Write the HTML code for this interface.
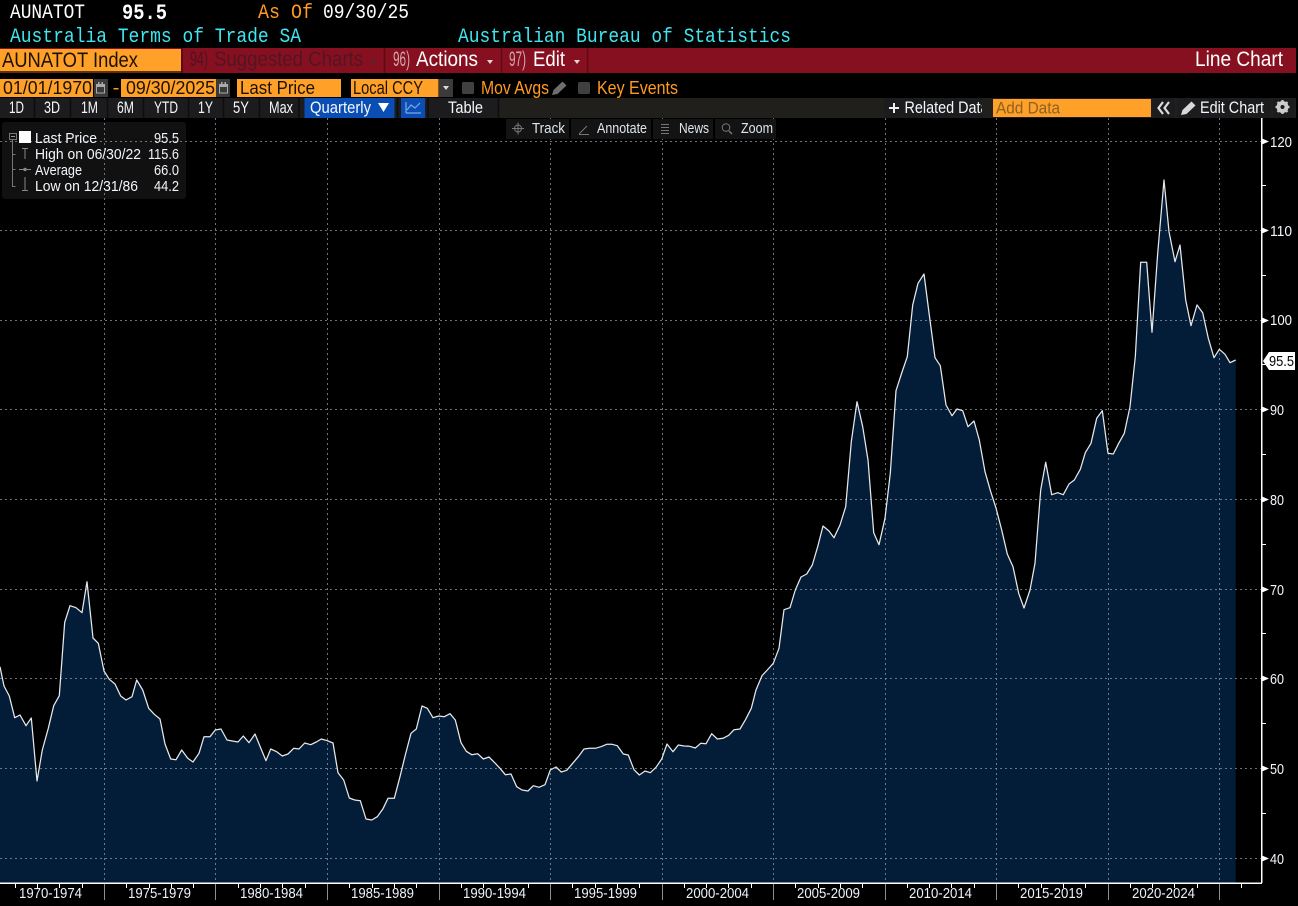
<!DOCTYPE html>
<html lang="en"><head><meta charset="utf-8"><title>AUNATOT Line Chart</title>
<style>
html,body{margin:0;padding:0;background:#000;width:1298px;height:906px;overflow:hidden}
svg{display:block}
text{font-family:"Liberation Sans",sans-serif;white-space:pre}
.m{font-family:"Liberation Mono",monospace;font-size:20.5px}
.r2{font-size:21px}
.r3{font-size:18.5px}
.r4{font-size:16.5px;fill:#f4f8fc}
.ov{font-size:14.5px;fill:#dfe6ee}
.lg{font-size:14.5px;fill:#f2f6fa}
.ax{font-size:14.5px;fill:#f2f7fc}
.xl{font-size:14.5px;fill:#eaf2fa}
</style></head><body>
<svg width="1298" height="906" viewBox="0 0 1298 906" xmlns="http://www.w3.org/2000/svg">
<defs><clipPath id="rd"><rect x="884" y="98" width="98" height="20"/></clipPath></defs>
<rect width="1298" height="906" fill="#000"/>

<!-- legend background -->
<rect x="2" y="122" width="184" height="77" rx="3" fill="#111112"/>

<!-- area -->
<polygon fill="#031d38" points="0,883 0,666.7 4,686 9.3,696 14.7,717.7 20,715 26,725.7 31.3,718 37,781 42.3,750 48.3,728.3 53.7,705.7 59.3,695.7 64.7,622.3 70,605.7 76,607.7 82,612.7 87,581.7 93,638 98.3,643.3 104,671 109.3,679.3 115,684 120.7,696 126,700 132,696.7 136.7,680 142.7,690 148.7,708.3 154.3,714.3 160,719 165,744 170.7,759 176,759.7 181.7,750 187.7,758.3 193,762 199,753.3 204,736.7 210,736.7 215.3,730 221,729 227,740 232.3,741 238,742 243.3,736 249,742.7 255,734 260.3,747 266,760.7 270.7,749 276.7,751.7 282.3,756 288,754 293.7,748.3 299,749 304.7,743 310.7,744.7 316.3,742 321.3,739 327.3,740.7 333,743 338,772.7 343.7,780 349.3,798 354.7,800 360.3,800.7 366,819 371.7,820 377.3,816.7 383,808.7 388,798.3 394.3,798.3 400,776.7 405.3,755 411,733.3 416.3,729 422,706 427.3,708.3 433,717.7 438.7,716 444.3,716.7 450,713.7 455.3,720 461,742.7 466.3,751.3 471.7,754.7 477.7,753.7 483.3,759 489,757 494.7,762.7 500,768.3 505.3,774.7 511,774 516.7,786.7 522,790 528,791 533.3,785.7 539,787.3 545,784.7 550.3,770 556,767 561.3,772 566.7,770.3 572.7,763.3 578.3,756.7 584,749 589.7,748.3 595.3,748.3 601,746.7 606.7,744.3 612,744.3 617.3,745.7 623.3,754 628.3,755 634,769.7 639.3,775 645,771 650.3,772.7 656,767.3 661.7,759 667,744 673,751.7 678.3,745 684,746 689.7,746.3 695.3,748 700.7,743.3 706,743.7 711.7,733.7 717.3,739 723,738.3 728.7,735.3 734,729.7 740,729 745.7,719.3 751.3,708.3 756,690 762,675.7 767.3,670 773.3,663.3 779,648.3 784,609.7 790,607.7 795.3,590 801,577 806.7,574 812.3,565 817.7,546.7 823,526 829,531 834,537.7 840,525 845.7,506.7 851.3,441.7 857,401.7 862.7,426.7 868,460 873.7,532.7 879,544.7 885,518.3 890.3,473.3 896,390.7 901.7,373 907.3,356.7 912.7,305 918,283.3 924,274 929.3,315 935,357.7 940.3,365.7 946,405 952,415.7 957,409 962.7,410.7 968,426.7 974,421 979.3,440 985,471.7 990.7,491.7 996,508 1001.7,530 1007.3,554 1013,566.7 1018.7,593.3 1024,608 1030,590 1035,563.3 1040.7,490 1045.7,462.3 1051.7,494.7 1057.7,492.7 1063.3,494.7 1069,484 1074.3,480 1080.3,469.3 1085.3,452.7 1091,443.3 1096.7,418.3 1102.3,410.7 1108,453.3 1113.3,454 1118.7,443.3 1124.3,433.3 1130,406.7 1135.3,356.7 1140.7,262.3 1146.7,262.3 1152,332.3 1157.7,253.3 1164,180 1169,231.7 1175,261.7 1180,245 1185.7,300 1191,325.7 1197,305 1202.7,312.7 1208.3,338.3 1214,357.7 1219.3,349.3 1225,354.3 1230,362.7 1235.7,360 1235.7,883"/>

<!-- grid -->
<g stroke="#8a8f96" stroke-opacity=".8" stroke-width="1" stroke-dasharray="2 3" fill="none">
<path d="M0 141.5H1262M0 230.5H1262M0 320.5H1262M0 409.5H1262M0 499.5H1262M0 589.5H1262M0 678.5H1262M0 768.5H1262M0 858.5H1262"/>
<path d="M104.5 118V883M215.5 118V883M327.5 118V883M439.5 118V883M550.5 118V883M662.5 118V883M773.5 118V883M885.5 118V883M996.5 118V883M1108.5 118V883M1219.5 118V883"/>
</g>

<!-- line -->
<polyline fill="none" stroke="#e6e8ea" stroke-width="1.25" stroke-linejoin="round" points="0,666.7 4,686 9.3,696 14.7,717.7 20,715 26,725.7 31.3,718 37,781 42.3,750 48.3,728.3 53.7,705.7 59.3,695.7 64.7,622.3 70,605.7 76,607.7 82,612.7 87,581.7 93,638 98.3,643.3 104,671 109.3,679.3 115,684 120.7,696 126,700 132,696.7 136.7,680 142.7,690 148.7,708.3 154.3,714.3 160,719 165,744 170.7,759 176,759.7 181.7,750 187.7,758.3 193,762 199,753.3 204,736.7 210,736.7 215.3,730 221,729 227,740 232.3,741 238,742 243.3,736 249,742.7 255,734 260.3,747 266,760.7 270.7,749 276.7,751.7 282.3,756 288,754 293.7,748.3 299,749 304.7,743 310.7,744.7 316.3,742 321.3,739 327.3,740.7 333,743 338,772.7 343.7,780 349.3,798 354.7,800 360.3,800.7 366,819 371.7,820 377.3,816.7 383,808.7 388,798.3 394.3,798.3 400,776.7 405.3,755 411,733.3 416.3,729 422,706 427.3,708.3 433,717.7 438.7,716 444.3,716.7 450,713.7 455.3,720 461,742.7 466.3,751.3 471.7,754.7 477.7,753.7 483.3,759 489,757 494.7,762.7 500,768.3 505.3,774.7 511,774 516.7,786.7 522,790 528,791 533.3,785.7 539,787.3 545,784.7 550.3,770 556,767 561.3,772 566.7,770.3 572.7,763.3 578.3,756.7 584,749 589.7,748.3 595.3,748.3 601,746.7 606.7,744.3 612,744.3 617.3,745.7 623.3,754 628.3,755 634,769.7 639.3,775 645,771 650.3,772.7 656,767.3 661.7,759 667,744 673,751.7 678.3,745 684,746 689.7,746.3 695.3,748 700.7,743.3 706,743.7 711.7,733.7 717.3,739 723,738.3 728.7,735.3 734,729.7 740,729 745.7,719.3 751.3,708.3 756,690 762,675.7 767.3,670 773.3,663.3 779,648.3 784,609.7 790,607.7 795.3,590 801,577 806.7,574 812.3,565 817.7,546.7 823,526 829,531 834,537.7 840,525 845.7,506.7 851.3,441.7 857,401.7 862.7,426.7 868,460 873.7,532.7 879,544.7 885,518.3 890.3,473.3 896,390.7 901.7,373 907.3,356.7 912.7,305 918,283.3 924,274 929.3,315 935,357.7 940.3,365.7 946,405 952,415.7 957,409 962.7,410.7 968,426.7 974,421 979.3,440 985,471.7 990.7,491.7 996,508 1001.7,530 1007.3,554 1013,566.7 1018.7,593.3 1024,608 1030,590 1035,563.3 1040.7,490 1045.7,462.3 1051.7,494.7 1057.7,492.7 1063.3,494.7 1069,484 1074.3,480 1080.3,469.3 1085.3,452.7 1091,443.3 1096.7,418.3 1102.3,410.7 1108,453.3 1113.3,454 1118.7,443.3 1124.3,433.3 1130,406.7 1135.3,356.7 1140.7,262.3 1146.7,262.3 1152,332.3 1157.7,253.3 1164,180 1169,231.7 1175,261.7 1180,245 1185.7,300 1191,325.7 1197,305 1202.7,312.7 1208.3,338.3 1214,357.7 1219.3,349.3 1225,354.3 1230,362.7 1235.7,360"/>

<!-- header -->
<text class="m" x="10" y="18" fill="#fff" textLength="75" lengthAdjust="spacingAndGlyphs">AUNATOT</text>
<text class="m" x="122" y="19" fill="#fff" font-weight="700" style="font-size:22px" textLength="45" lengthAdjust="spacingAndGlyphs">95.5</text>
<text class="m" x="258" y="18" fill="#ff9a22" textLength="55" lengthAdjust="spacingAndGlyphs">As Of</text>
<text class="m" x="323" y="18" fill="#fff" textLength="86" lengthAdjust="spacingAndGlyphs">09/30/25</text>
<text class="m" x="10" y="42" fill="#3fe6f0" textLength="291" lengthAdjust="spacingAndGlyphs">Australia Terms of Trade SA</text>
<text class="m" x="458" y="42" fill="#3fe6f0" textLength="333" lengthAdjust="spacingAndGlyphs">Australian Bureau of Statistics</text>

<!-- red bar -->
<rect x="0" y="48" width="1296" height="25" fill="#86101f"/>
<rect x="0" y="49" width="181" height="22.500" fill="#ffa028"/>
<rect x="181" y="48" width="2" height="25" fill="#5a0b14"/>
<path d="M384.5 48V73M501.5 48V73M587.5 48V73" stroke="#5e0b16" stroke-width="1.5"/>
<rect x="0" y="71" width="181" height="1.5" fill="#5b3a08"/>
<text class="r2" x="2" y="67" fill="#1c1204" textLength="136" lengthAdjust="spacingAndGlyphs">AUNATOT Index</text>
<text class="r2" x="190" y="66" fill="#4f1220" textLength="18" lengthAdjust="spacingAndGlyphs">94)</text>
<text class="r2" x="214" y="66" fill="#531524" textLength="149" lengthAdjust="spacingAndGlyphs">Suggested Charts</text>
<path d="M370 60h6l-3 4z" fill="#5c2230"/>
<text class="r2" x="393" y="66" fill="#cda7ac" textLength="17" lengthAdjust="spacingAndGlyphs">96)</text>
<text class="r2" x="416" y="66" fill="#fff" textLength="62" lengthAdjust="spacingAndGlyphs">Actions</text>
<path d="M487 60h6l-3 4z" fill="#e8d6d8"/>
<text class="r2" x="509" y="66" fill="#cda7ac" textLength="17" lengthAdjust="spacingAndGlyphs">97)</text>
<text class="r2" x="533" y="66" fill="#fff" textLength="32" lengthAdjust="spacingAndGlyphs">Edit</text>
<path d="M574 60h6l-3 4z" fill="#e8d6d8"/>
<text class="r2" x="1195" y="66" fill="#fff" textLength="88" lengthAdjust="spacingAndGlyphs">Line Chart</text>

<!-- row 3 -->
<rect x="0" y="79" width="93" height="18" fill="#ffa028"/>
<rect x="94" y="79" width="14" height="18" fill="#3a3a3a"/>
<rect x="121" y="79" width="95" height="18" fill="#ffa028"/>
<rect x="216" y="79" width="14" height="18" fill="#3a3a3a"/>
<g fill="none" stroke="#aaa" stroke-width="1"><rect x="96.500" y="84.500" width="8" height="8.500"/><rect x="219.500" y="84.500" width="8" height="8.500"/></g>
<path d="M96 84h9v3h-9zM219 84h9v3h-9zM98 82h1.500v2.500h-1.500zM101.500 82h1.500v2.500h-1.500zM221 82h1.500v2.500h-1.500zM224.500 82h1.500v2.500h-1.500z" fill="#aaa"/>
<text class="r3" x="3" y="94" fill="#1c1204" textLength="89" lengthAdjust="spacingAndGlyphs">01/01/1970</text>
<rect x="113.5" y="88" width="5" height="1.5" fill="#ff9a22"/>
<text class="r3" x="126" y="94" fill="#1c1204" textLength="89" lengthAdjust="spacingAndGlyphs">09/30/2025</text>
<rect x="237" y="79" width="104" height="18" fill="#ffa028"/>
<text class="r3" x="240" y="94" fill="#1c1204" textLength="75" lengthAdjust="spacingAndGlyphs">Last Price</text>
<rect x="351" y="79" width="87.500" height="18" fill="#ffa028"/>
<text class="r3" x="353" y="94" fill="#1c1204" textLength="70" lengthAdjust="spacingAndGlyphs">Local CCY</text>
<rect x="439" y="79" width="14" height="18" fill="#3a3a3a"/>
<path d="M443 86h6l-3 4z" fill="#ddd"/>
<rect x="462" y="82" width="12" height="12" rx="1.500" fill="#404040"/>
<text class="r3" x="481" y="94" fill="#ff9a22" textLength="68" lengthAdjust="spacingAndGlyphs">Mov Avgs</text>
<path d="M552 95l1.500-5 9-8.500 4 4-9 8.500z" fill="#6e6e6e"/>
<rect x="578" y="82" width="12" height="12" rx="1.500" fill="#404040"/>
<text class="r3" x="597" y="94" fill="#ff9a22" textLength="81" lengthAdjust="spacingAndGlyphs">Key Events</text>

<!-- row 4 -->
<rect x="0" y="98" width="1296" height="20" fill="#201f1c"/>
<rect x="0" y="98" width="498" height="20" fill="#1c1c1e"/>
<path d="M34.500 98V118M70.500 98V118M107.500 98V118M143.500 98V118M188.500 98V118M223.500 98V118M259.500 98V118M299 98V118M397.500 98V118M428 98V118M498.500 98V118" stroke="#0d0d0d" stroke-width="1.500"/>
<text class="r4" x="9" y="113" textLength="15" lengthAdjust="spacingAndGlyphs">1D</text>
<text class="r4" x="44" y="113" textLength="16" lengthAdjust="spacingAndGlyphs">3D</text>
<text class="r4" x="81" y="113" textLength="17" lengthAdjust="spacingAndGlyphs">1M</text>
<text class="r4" x="117" y="113" textLength="17" lengthAdjust="spacingAndGlyphs">6M</text>
<text class="r4" x="154" y="113" textLength="24" lengthAdjust="spacingAndGlyphs">YTD</text>
<text class="r4" x="198" y="113" textLength="15" lengthAdjust="spacingAndGlyphs">1Y</text>
<text class="r4" x="233" y="113" textLength="16" lengthAdjust="spacingAndGlyphs">5Y</text>
<text class="r4" x="269" y="113" textLength="24" lengthAdjust="spacingAndGlyphs">Max</text>
<rect x="304.500" y="98" width="90" height="20" fill="#0a4eb4"/>
<text class="r4" x="310" y="113" fill="#fff" textLength="61" lengthAdjust="spacingAndGlyphs">Quarterly</text>
<path d="M378 103h11l-5.500 9z" fill="#fff"/>
<rect x="401" y="98" width="24" height="20" fill="#0a4eb4"/>
<path d="M407 110l4-5 4 3 5-5M406 113h15M406 102v11" fill="none" stroke="#7ea8e6" stroke-width="1.200"/>
<text class="r4" x="448" y="113" textLength="35" lengthAdjust="spacingAndGlyphs">Table</text>

<rect x="884" y="98" width="98" height="20" fill="#1c1c1e"/>
<path d="M889 108h10M894 103v10" stroke="#eee" stroke-width="2"/>
<text class="r4" x="904.500" y="113" clip-path="url(#rd)" textLength="84" lengthAdjust="spacingAndGlyphs">Related Data</text>
<rect x="993" y="99" width="158" height="18" fill="#ffa028"/>
<text class="r4" x="996" y="113.500" style="fill:#8c6124;font-size:17px" textLength="64" lengthAdjust="spacingAndGlyphs">Add Data</text>
<rect x="1153" y="98" width="22" height="20" fill="#1c1c1e"/>
<path d="M1163 102l-4.500 6 4.500 6M1169 102l-4.500 6 4.500 6" fill="none" stroke="#ddd" stroke-width="2.200"/>
<rect x="1177" y="98" width="94" height="20" fill="#1c1c1e"/>
<path d="M1181 115l1.500-5 9-8.500 4 4-9 8.500z" fill="#d8d8d8"/>
<text class="r4" x="1200" y="113" textLength="64" lengthAdjust="spacingAndGlyphs">Edit Chart</text>
<rect x="1273" y="98" width="22" height="20" fill="#1c1c1e"/>
<circle cx="1282.500" cy="107" r="4.500" fill="none" stroke="#ccc" stroke-width="3"/>
<path d="M1282.500 100v14M1275.500 107h14M1277.500 102l10 10M1287.500 102l-10 10" stroke="#ccc" stroke-width="2.200"/>
<circle cx="1282.500" cy="107" r="2" fill="#1c1c1e"/>

<!-- overlay buttons -->
<rect x="506" y="119" width="63" height="20" fill="#131313"/>
<rect x="571" y="119" width="80" height="20" fill="#131313"/>
<rect x="653" y="119" width="60" height="20" fill="#131313"/>
<rect x="715" y="119" width="61" height="20" fill="#131313"/>
<circle cx="518" cy="128.500" r="3.500" fill="none" stroke="#777"/>
<path d="M518 122.500v12M512 128.500h12" stroke="#777"/>
<text class="ov" x="532" y="133" textLength="33" lengthAdjust="spacingAndGlyphs">Track</text>
<path d="M579 134l8-8M579 134.500h10" stroke="#777" fill="none"/>
<text class="ov" x="597" y="133" textLength="50" lengthAdjust="spacingAndGlyphs">Annotate</text>
<path d="M661 124.500h8M661 127.500h8M661 130.500h8M661 133.500h8" stroke="#777"/>
<text class="ov" x="679" y="133" textLength="30" lengthAdjust="spacingAndGlyphs">News</text>
<circle cx="726" cy="127.500" r="3.800" fill="none" stroke="#777"/>
<path d="M729 131l3 3" stroke="#777" stroke-width="1.500"/>
<text class="ov" x="741" y="133" textLength="32" lengthAdjust="spacingAndGlyphs">Zoom</text>

<!-- legend -->
<rect x="9.500" y="133.500" width="7" height="6" fill="none" stroke="#777"/>
<path d="M11 136.500h4" stroke="#999"/>
<path d="M12.500 140V186.500H15.500M12.500 154.500H15.500M12.500 169.500H15.500" fill="none" stroke="#777"/>
<rect x="19" y="131" width="12" height="12" fill="#fff"/>
<path d="M22 148.500h6M25 148.500V159" stroke="#888" fill="none"/>
<path d="M19 169.500h12" stroke="#888"/><circle cx="25" cy="169.500" r="1.700" fill="#888"/>
<path d="M22 190.500h6M25 177V190.500" stroke="#888" fill="none"/>
<text class="lg" x="35" y="143" textLength="62" lengthAdjust="spacingAndGlyphs">Last Price</text>
<text class="lg" x="154" y="143" textLength="25" lengthAdjust="spacingAndGlyphs">95.5</text>
<text class="lg" x="35" y="159" textLength="106" lengthAdjust="spacingAndGlyphs">High on 06/30/22</text>
<text class="lg" x="148" y="159" textLength="31" lengthAdjust="spacingAndGlyphs">115.6</text>
<text class="lg" x="35" y="175" textLength="47" lengthAdjust="spacingAndGlyphs">Average</text>
<text class="lg" x="154" y="175" textLength="25" lengthAdjust="spacingAndGlyphs">66.0</text>
<text class="lg" x="35" y="191" textLength="103" lengthAdjust="spacingAndGlyphs">Low on 12/31/86</text>
<text class="lg" x="154" y="191" textLength="25" lengthAdjust="spacingAndGlyphs">44.2</text>

<!-- y axis -->
<rect x="1261" y="118" width="1.500" height="765" fill="#fff"/>
<g fill="#fff">
<path d="M1262 138.500l7 3-7 3zM1262 227.500l7 3-7 3zM1262 317.500l7 3-7 3zM1262 406.500l7 3-7 3zM1262 496.500l7 3-7 3zM1262 586.500l7 3-7 3zM1262 675.500l7 3-7 3zM1262 765.500l7 3-7 3zM1262 855.500l7 3-7 3z"/>
<path d="M1262 185h4v1h-4zM1262 275h4v1h-4zM1262 364h4v1h-4zM1262 454h4v1h-4zM1262 544h4v1h-4zM1262 633h4v1h-4zM1262 723h4v1h-4zM1262 813h4v1h-4z"/>
</g>
<text class="ax" x="1270" y="147" textLength="22" lengthAdjust="spacingAndGlyphs">120</text>
<text class="ax" x="1270" y="236" textLength="22" lengthAdjust="spacingAndGlyphs">110</text>
<text class="ax" x="1270" y="325" textLength="22" lengthAdjust="spacingAndGlyphs">100</text>
<text class="ax" x="1270" y="415" textLength="14" lengthAdjust="spacingAndGlyphs">90</text>
<text class="ax" x="1270" y="505" textLength="14" lengthAdjust="spacingAndGlyphs">80</text>
<text class="ax" x="1270" y="595" textLength="14" lengthAdjust="spacingAndGlyphs">70</text>
<text class="ax" x="1270" y="684" textLength="14" lengthAdjust="spacingAndGlyphs">60</text>
<text class="ax" x="1270" y="774" textLength="14" lengthAdjust="spacingAndGlyphs">50</text>
<text class="ax" x="1270" y="864" textLength="14" lengthAdjust="spacingAndGlyphs">40</text>
<path d="M1263 361l6-9h26v18h-26z" fill="#fff"/>
<text class="ax" x="1269" y="366" style="fill:#000" textLength="25" lengthAdjust="spacingAndGlyphs">95.5</text>

<!-- x axis -->
<rect x="0" y="882.500" width="1262" height="1.500" fill="#fff"/>
<path d="M104.500 884V900M215.500 884V900M327.500 884V900M439.500 884V900M550.500 884V900M662.500 884V900M773.500 884V900M885.500 884V900M996.500 884V900M1108.500 884V900M1219.500 884V900" stroke="#8e8e8e"/>
<path d="M15.500 884v4M37.500 884v4M59.500 884v4M82.500 884v4M126.500 884v4M149.500 884v4M171.500 884v4M193.500 884v4M238.500 884v4M260.500 884v4M282.500 884v4M305.500 884v4M349.500 884v4M372.500 884v4M394.500 884v4M416.500 884v4M461.500 884v4M483.500 884v4M505.500 884v4M528.500 884v4M572.500 884v4M595.500 884v4M617.500 884v4M639.500 884v4M684.500 884v4M706.500 884v4M728.500 884v4M751.500 884v4M795.500 884v4M818.500 884v4M840.500 884v4M862.500 884v4M907.500 884v4M929.500 884v4M951.500 884v4M974.500 884v4M1018.500 884v4M1041.500 884v4M1063.500 884v4M1085.500 884v4M1130.500 884v4M1152.500 884v4M1174.500 884v4M1197.500 884v4M1241.500 884v4" stroke="#fff"/>
<text class="xl" x="19" y="898" textLength="63" lengthAdjust="spacingAndGlyphs">1970-1974</text>
<text class="xl" x="128" y="898" textLength="63" lengthAdjust="spacingAndGlyphs">1975-1979</text>
<text class="xl" x="240" y="898" textLength="63" lengthAdjust="spacingAndGlyphs">1980-1984</text>
<text class="xl" x="351" y="898" textLength="63" lengthAdjust="spacingAndGlyphs">1985-1989</text>
<text class="xl" x="463" y="898" textLength="63" lengthAdjust="spacingAndGlyphs">1990-1994</text>
<text class="xl" x="574" y="898" textLength="63" lengthAdjust="spacingAndGlyphs">1995-1999</text>
<text class="xl" x="686" y="898" textLength="63" lengthAdjust="spacingAndGlyphs">2000-2004</text>
<text class="xl" x="797" y="898" textLength="63" lengthAdjust="spacingAndGlyphs">2005-2009</text>
<text class="xl" x="909" y="898" textLength="63" lengthAdjust="spacingAndGlyphs">2010-2014</text>
<text class="xl" x="1020" y="898" textLength="63" lengthAdjust="spacingAndGlyphs">2015-2019</text>
<text class="xl" x="1132" y="898" textLength="63" lengthAdjust="spacingAndGlyphs">2020-2024</text>
</svg>
</body></html>
